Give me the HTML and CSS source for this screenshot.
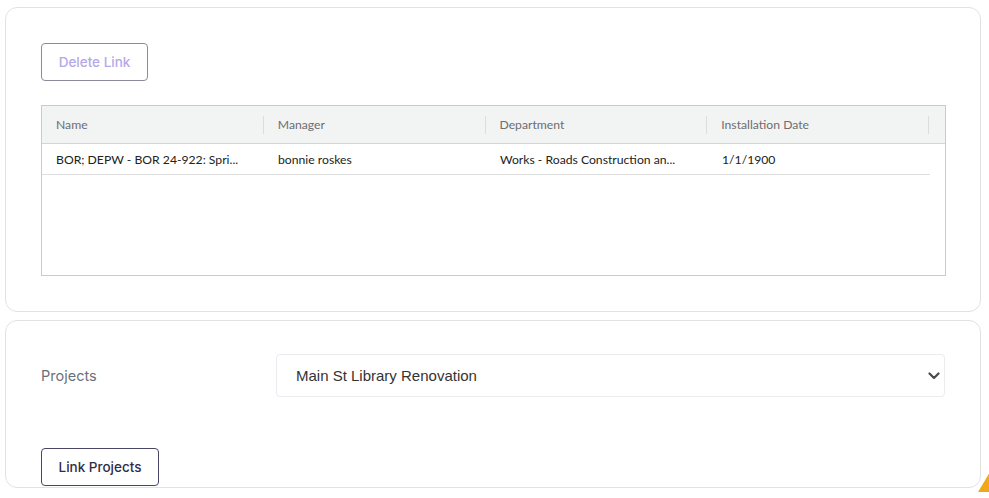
FILE: index.html
```html
<!DOCTYPE html>
<html lang="en">
<head>
    <meta charset="UTF-8">
    <title>Project Links</title>
    <link rel="stylesheet" href="styles.css">
</head>
<body>
    <div class="page">
        <div class="card card-links">
            <button class="btn btn-disabled">Delete Link</button>

            <div class="grid">
                <div class="grid-head">
                    <div class="cell">Name</div>
                    <div class="cell">Manager</div>
                    <div class="cell">Department</div>
                    <div class="cell">Installation Date</div>
                </div>
                <div class="grid-body">
                    <div class="grid-row">
                        <div class="cell">BOR; DEPW - BOR 24-922: Spri...</div>
                        <div class="cell">bonnie roskes</div>
                        <div class="cell">Works - Roads Construction an...</div>
                        <div class="cell">1/1/1900</div>
                    </div>
                </div>
            </div>
        </div>

        <div class="card card-projects">
            <div class="form-row">
                <label class="form-label" for="projects">Projects</label>
                <div class="select-wrap">
                    <select id="projects" class="select">
                        <option>Main St Library Renovation</option>
                    </select>
                    <svg class="chevron" width="12" height="8" viewBox="0 0 12 8">
                        <path d="M1.5 1.5 L6 6 L10.5 1.5" fill="none" stroke="#4a4a4a" stroke-width="2.2" stroke-linecap="round" stroke-linejoin="round"/>
                    </svg>
                </div>
            </div>
            <button class="btn btn-primary">Link Projects</button>
        </div>
    </div>

    <div class="corner-badge"></div>
</body>
</html>
```

FILE: styles.css
```css
body {
    margin: 0;
    background-color: #fff;
    font-family: Inter, "Liberation Sans", sans-serif;
    overflow: hidden;
}

.page {
    padding: 7px 8px 0 5px;
    width: 976px;
}

.card {
    border: 1px solid #e2e2e2;
    border-radius: 12px;
    background: #fff;
    box-sizing: border-box;
}

.card-links {
    height: 305px;
    padding: 35px 34px 0 35px;
}

.card-projects {
    margin-top: 8px;
    height: 168px;
    padding: 33px 35px 0 35px;
}

.btn {
    display: block;
    height: 38px;
    padding: 0 10px;
    font-family: Inter, "Liberation Sans", sans-serif;
    font-size: 13.5px;
    font-weight: 500;
    background: #fff;
    border-radius: 4px;
    cursor: pointer;
}

.btn-disabled {
    width: 107px;
    color: #b4a8e8;
    border: 1px solid #8e8a9e;
}

.btn-primary {
    width: 118px;
    color: #2f2d48;
    border: 1px solid #4a4668;
    margin-top: 51px;
}

/* table */
.grid {
    margin-top: 24px;
    height: 171px;
    border: 1px solid #c9cccc;
    box-sizing: border-box;
    font-family: "Segoe UI", Lato, "Liberation Sans", sans-serif;
    font-size: 12.2px;
}

.grid-head {
    display: flex;
    height: 37px;
    background: #f2f3f3;
    border-bottom: 1px solid #d2d4d4;
    color: #6e6e6e;
    padding-right: 16px;
}

.grid-head .cell {
    position: relative;
}

.grid-head .cell::after {
    content: "";
    position: absolute;
    right: 0;
    top: 10px;
    height: 18px;
    border-right: 1px solid #dcdcdc;
}

.grid-row {
    display: flex;
    height: 30px;
    border-bottom: 1px solid #dedede;
    margin-right: 15px;
    color: #222;
}

.cell {
    width: 222px;
    padding: 0 14px;
    box-sizing: border-box;
    display: flex;
    align-items: center;
    white-space: nowrap;
    overflow: hidden;
}

/* projects form */
.form-row {
    display: flex;
    align-items: center;
}

.form-label {
    width: 235px;
    font-size: 14.5px;
    color: #6c707a;
}

.select-wrap {
    position: relative;
    flex: 1;
}

.select {
    width: 100%;
    height: 43px;
    padding: 0 19px;
    border: 1px solid #ebebf0;
    border-radius: 4px;
    background: #fff;
    font-family: "Liberation Sans", Arial, sans-serif;
    font-size: 15px;
    color: #333;
    -webkit-appearance: none;
    appearance: none;
}

.chevron {
    position: absolute;
    right: 5px;
    top: 18px;
    pointer-events: none;
}

.corner-badge {
    position: absolute;
    left: 978px;
    top: 472px;
    width: 12px;
    height: 20px;
    background: #f0a81a;
    clip-path: polygon(0 100%, 100% 0, 100% 100%);
}
```
